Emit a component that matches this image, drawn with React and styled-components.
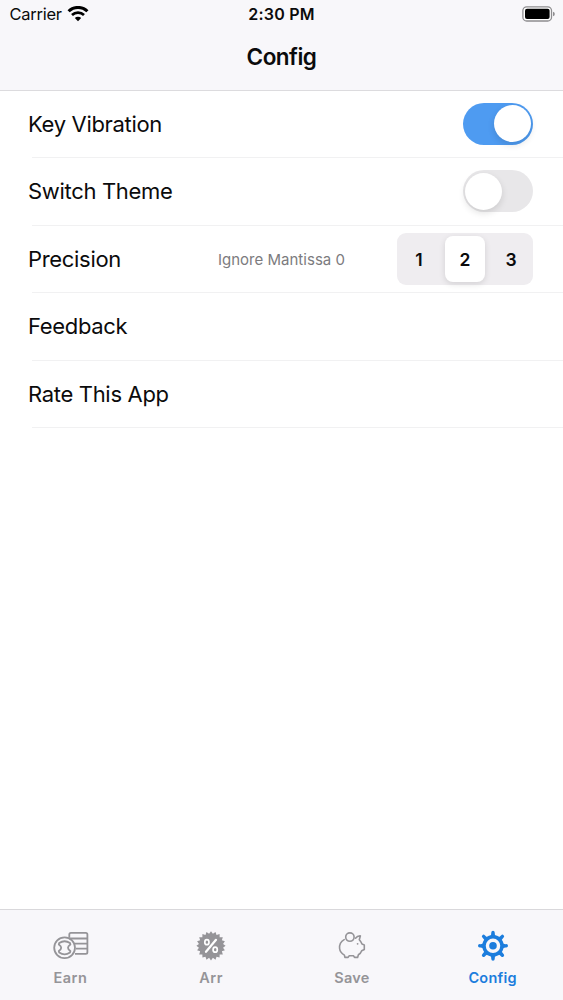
import React from 'react';
import styled, {createGlobalStyle} from 'styled-components';

const tabs = [
  {name: 'Earn', Icon: CoinsIcon, spacing: 0.5},
  {name: 'Arr', Icon: PercentIcon, spacing: 0.5},
  {name: 'Save', Icon: PiggyIcon, spacing: 0.25},
  {name: 'Config', Icon: GearIcon, spacing: 0.25},
];

export default function App() {
  const [vibration, setVibration] = React.useState(true);
  const [theme, setTheme] = React.useState(false);
  const [precision, setPrecision] = React.useState(2);
  const [tab, setTab] = React.useState('Config');

  return (
    <Screen>
      <GlobalStyle />
      <Header>
        <StatusBar>
          <Carrier>
            Carrier
            <WifiIcon />
          </Carrier>
          <Time>2:30 PM</Time>
          <Battery>
            <BatteryIcon />
          </Battery>
        </StatusBar>
        <Title>Config</Title>
      </Header>
      <List>
        <Row>
          <Label>Key Vibration</Label>
          <Switch $on={vibration} onClick={() => setVibration(!vibration)}>
            <Knob />
          </Switch>
        </Row>
        <Row>
          <Label>Switch Theme</Label>
          <Switch $on={theme} onClick={() => setTheme(!theme)}>
            <Knob />
          </Switch>
        </Row>
        <Row>
          <Label>Precision</Label>
          <Hint>Ignore Mantissa 0</Hint>
          <Segments>
            {[1, 2, 3].map((n) => (
              <Segment
                key={n}
                $active={n === precision}
                onClick={() => setPrecision(n)}
              >
                {n}
              </Segment>
            ))}
          </Segments>
        </Row>
        <Row>
          <Label>Feedback</Label>
        </Row>
        <Row>
          <Label>Rate This App</Label>
        </Row>
      </List>
      <TabBar>
        {tabs.map(({name, Icon, spacing}) => (
          <Tab
            key={name}
            $active={name === tab}
            $spacing={spacing}
            onClick={() => setTab(name)}
          >
            <Icon />
            <span>{name}</span>
          </Tab>
        ))}
      </TabBar>
    </Screen>
  );
}

function WifiIcon() {
  return (
    <svg width="22" height="16" viewBox="0 0 22 16" fill="none" stroke="#000">
      <path d="M1.6 5.3A13.3 13.3 0 0 1 20.4 5.3" strokeWidth="3" />
      <path d="M5 9A8.6 8.6 0 0 1 17 9" strokeWidth="2.7" />
      <path
        d="M11 15.2L7.8 12A4.6 4.6 0 0 1 14.2 12Z"
        fill="#000"
        stroke="none"
      />
    </svg>
  );
}

function BatteryIcon() {
  return (
    <svg width="34" height="16" viewBox="0 0 34 16">
      <rect
        x="0.9"
        y="0.8"
        width="28.6"
        height="14.2"
        rx="3.8"
        fill="#fff"
        stroke="#8d8c8f"
        strokeWidth="1.3"
      />
      <rect x="3" y="2.8" width="24.6" height="10.2" rx="2" fill="#000" />
      <path d="M31 5.8Q32.8 6.2 32.8 8T31 10.2Z" fill="#8d8c8f" />
    </svg>
  );
}

function CoinsIcon() {
  return (
    <TabIcon viewBox="0 0 40 36" fill="none" stroke="currentColor">
      <g strokeWidth="1.8" strokeLinejoin="round">
        <path d="M19.3 9.8V6.5Q19.3 4.9 20.9 4.9H35.8Q37.4 4.9 37.4 6.5V24.2Q37.4 25.8 35.8 25.8H25" />
        <path d="M19.5 10.5H37.2M23.5 15.6H37.2M26 20.7H37.2" />
        <circle cx="14.6" cy="19.8" r="10.4" />
        <path d="M9.2 15.1Q14.6 11.4 20 15.1L20.4 16.6Q15.6 19.8 20.4 23L20 24.5Q14.6 28.2 9.2 24.5L8.8 23Q13.6 19.8 8.8 16.6Z" />
      </g>
    </TabIcon>
  );
}

function PercentIcon() {
  const points = [];
  for (let i = 0; i < 40; i++) {
    const r = i % 2 ? 12.2 : 14.6;
    const a = (i * Math.PI) / 20 - Math.PI / 2;
    points.push(
      `${(20 + r * Math.cos(a)).toFixed(2)},${(17.8 + r * Math.sin(a)).toFixed(2)}`
    );
  }

  return (
    <TabIcon viewBox="0 0 40 36">
      <polygon points={points.join(' ')} fill="currentColor" />
      <g fill="none" stroke="#fff" strokeWidth="1.7" strokeLinecap="round">
        <path d="M25 11.8L15 23.8" strokeWidth="2.2" />
        <ellipse cx="15.9" cy="14.2" rx="2.1" ry="2.5" />
        <ellipse cx="24.2" cy="21.7" rx="2.1" ry="2.5" />
      </g>
    </TabIcon>
  );
}

function PiggyIcon() {
  return (
    <TabIcon viewBox="0 0 40 36" fill="none" stroke="currentColor">
      <g strokeWidth="1.6" strokeLinejoin="round" strokeLinecap="round">
        <circle cx="17.9" cy="9.1" r="4.2" />
        <path d="M12.2 11.6C8.6 13.5 7.3 17 7.6 20.5C7.9 23.6 9.7 25.6 12.4 27.1L12.9 29.4H16.1L17.1 27.8H21.6L22.5 29.4H25.6L26.4 26.8Q28.9 25.3 29.7 22.8L32.3 21.5V16.9L30 16.1Q29.2 13.7 27.3 11.8L28.4 7.9Q25.4 7.7 23.5 10.2" />
      </g>
      <circle cx="25.6" cy="15.8" r="0.9" fill="currentColor" stroke="none" />
    </TabIcon>
  );
}

function GearIcon() {
  return (
    <TabIcon viewBox="0 0 40 36" fill="currentColor">
      <circle
        cx="20"
        cy="17.8"
        r="9"
        fill="none"
        stroke="currentColor"
        strokeWidth="3.5"
      />
      <circle cx="20" cy="17.8" r="3.8" />
      {[0, 45, 90, 135, 180, 225, 270, 315].map((angle) => (
        <path
          key={angle}
          d="M16.6 8.7Q18.6 7.6 18.3 4.5A1.7 1.7 0 0 1 21.7 4.5Q21.4 7.6 23.4 8.7Z"
          transform={`rotate(${angle} 20 17.8)`}
        />
      ))}
    </TabIcon>
  );
}

const GlobalStyle = createGlobalStyle`
  * {
    box-sizing: border-box;
  }

  body {
    margin: 0;
    background: #fff;
    font-family: Inter, 'Liberation Sans', sans-serif;
  }

  button {
    border: 0;
    padding: 0;
    background: none;
    font-family: inherit;
  }
`;

const Screen = styled.div`
  display: flex;
  flex-direction: column;
  height: 100vh;
  background-color: #fff;
  color: #0b0b0c;
`;

const Header = styled.header`
  height: 91px;
  background-color: #f8f7fa;
  border-bottom: 1px solid #dcdbde;
`;

const StatusBar = styled.div`
  display: grid;
  grid-template-columns: 1fr auto 1fr;
  align-items: center;
  height: 30px;
  padding: 0 7px 2px;
`;

const Carrier = styled.div`
  display: flex;
  align-items: center;
  gap: 5px;
  padding-left: 2.5px;
  font-size: 16.5px;
  letter-spacing: -0.25px;

  svg {
    margin-top: -1px;
  }
`;

const Time = styled.div`
  font-size: 16px;
  font-weight: 600;
  letter-spacing: 0.25px;
`;

const Battery = styled.div`
  display: flex;
  justify-content: flex-end;
`;

const Title = styled.h1`
  margin: 0;
  padding-top: 13px;
  font-size: 22.5px;
  font-weight: 600;
  line-height: 28px;
  letter-spacing: -0.5px;
  text-align: center;
`;

const List = styled.main`
  flex: 1;
`;

const Row = styled.div`
  display: flex;
  align-items: center;
  height: 67.5px;
  padding: 0 30px 1px 28px;
  background: linear-gradient(#f1f1f2, #f1f1f2) 32px 100% / 100% 1px no-repeat;

  &:first-child {
    height: 67px;
    padding-bottom: 2px;
  }
`;

const Label = styled.div`
  margin-right: auto;
  font-size: 22px;
  letter-spacing: -0.32px;
  white-space: nowrap;
`;

const Switch = styled.button`
  display: flex;
  justify-content: ${(props) => (props.$on ? 'flex-end' : 'flex-start')};
  align-items: center;
  width: 70px;
  height: 42px;
  padding: 0 2px;
  border-radius: 21px;
  background-color: ${(props) => (props.$on ? '#4e9bf1' : '#e8e7e9')};
`;

const Knob = styled.span`
  width: 37px;
  height: 37px;
  border-radius: 50%;
  background-color: #fff;
  box-shadow: 0 3px 7px rgba(0, 0, 0, 0.12);
`;

const Hint = styled.div`
  margin-right: 52px;
  padding-top: 1px;
  color: #7c7b7e;
  font-size: 15px;
  letter-spacing: 0.02px;
  white-space: nowrap;
`;

const Segments = styled.div`
  display: flex;
  flex-shrink: 0;
  justify-content: space-between;
  align-items: center;
  width: 136px;
  height: 52px;
  padding: 0 2px;
  border-radius: 9px;
  background-color: #efedf0;
`;

const Segment = styled.button`
  width: 40px;
  height: 46px;
  padding-top: 2px;
  border-radius: 8px;
  color: #0b0b0c;
  font-size: 17.5px;
  font-weight: 600;
  background-color: ${(props) => (props.$active ? '#fff' : 'transparent')};
  box-shadow: ${(props) =>
    props.$active ? '0 2px 6px rgba(0, 0, 0, 0.12)' : 'none'};
`;

const TabBar = styled.nav`
  display: flex;
  height: 91px;
  padding-top: 18px;
  background-color: #f8f7fa;
  border-top: 1px solid #d9d8db;
`;

const Tab = styled.button`
  flex: 1;
  display: flex;
  flex-direction: column;
  align-items: center;
  gap: 4px;
  color: ${(props) => (props.$active ? '#1c7ddd' : '#959498')};
  font-size: 14.5px;
  font-weight: 600;
  line-height: 20px;
  letter-spacing: ${(props) => props.$spacing}px;
`;

const TabIcon = styled.svg`
  width: 40px;
  height: 36px;
`;
